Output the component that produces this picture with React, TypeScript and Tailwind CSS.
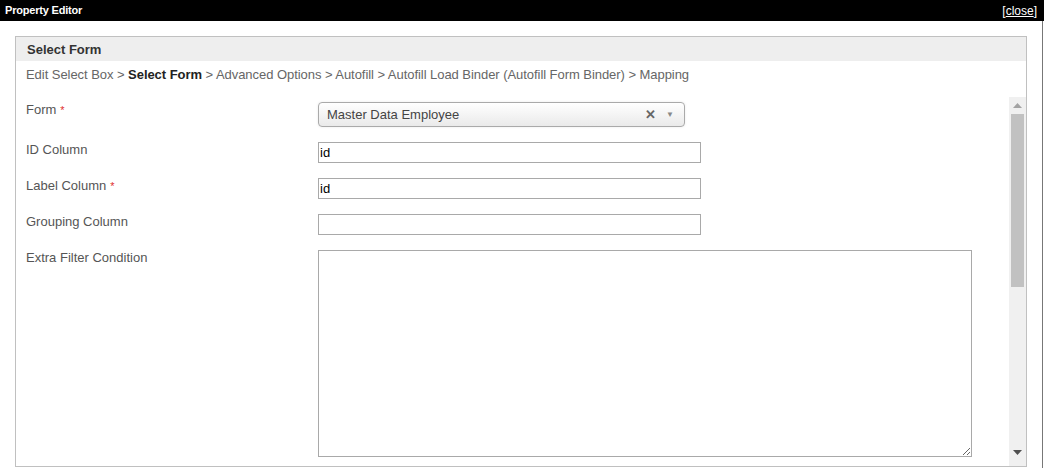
import React from "react"

const fields = [
  { label: "ID Column", value: "id" },
  { label: "Label Column", value: "id", required: true },
  { label: "Grouping Column", value: "" },
]

function Label({ text, required }: { text: string; required?: boolean }) {
  return (
    <div className="w-[292px] shrink-0 pt-[1px] text-[13px] leading-[14px] text-[#555]">
      {text}
      {required && <span className="ml-[4px] text-[11px] text-[#e03030]">*</span>}
    </div>
  )
}

export default function App() {
  return (
    <div className="w-[1044px] h-[468px] overflow-hidden bg-white font-['Liberation_Sans',Arial,sans-serif]">
      {/* Title bar */}
      <div className="h-[21px] bg-black flex items-center justify-between pl-[5px] pr-[7px] text-white">
        <span className="text-[11px] font-bold tracking-[-0.2px]">Property Editor</span>
        <span className="text-[12px]">
          [<span className="underline">close</span>]
        </span>
      </div>

      <div className="flex h-[447px]">
        <div className="w-[1042px] px-[15px] pt-[15px]">
          {/* Panel */}
          <div className="h-[431px] border border-[#c0c0c0] flex flex-col">
            <div className="h-[24px] shrink-0 bg-[#eeeeee] pl-[11px] pt-[1px] flex items-center text-[13px] font-bold text-[#333]">
              Select Form
            </div>
            <div className="h-[36px] shrink-0 pt-[7px] pl-[10px] text-[13px] leading-[14px] tracking-[-0.05px] text-[#666]">
              Edit Select Box &gt; <span className="font-bold text-[#222]">Select Form</span> &gt; Advanced Options &gt;
              Autofill &gt; Autofill Load Binder (Autofill Form Binder) &gt; Mapping
            </div>

            <div className="flex flex-1 min-h-0">
              {/* Form body */}
              <div className="flex-1 pl-[10px] pt-[5px] overflow-hidden">
                <div className="flex">
                  <Label text="Form" required />
                  <div className="w-[367px] h-[25px] rounded-[4px] border border-[#aaa] bg-gradient-to-b from-white to-[#eaeaea] flex items-center pl-[8px] pr-[10px] text-[13px] text-[#444] shadow-[0_0_3px_rgba(0,0,0,0.08)]">
                    <span className="flex-1">Master Data Employee</span>
                    <span className="text-[13px] font-bold text-[#666] mr-[10px]">✕</span>
                    <span className="text-[8px] text-[#888]">▼</span>
                  </div>
                </div>

                {fields.map((f) => (
                  <div key={f.label} className="flex mt-[15px]">
                    <Label text={f.label} required={f.required} />
                    <div className="w-[383px] h-[21px] border border-[#a9a9a9] pl-[1px] flex items-center text-[13px] text-black">
                      {f.value}
                    </div>
                  </div>
                ))}

                <div className="flex mt-[15px]">
                  <Label text="Extra Filter Condition" />
                  <textarea className="w-[654px] h-[207px] border border-[#a9a9a9] outline-none" />
                </div>
              </div>

              {/* Scrollbar */}
              <div className="w-[17px] shrink-0 bg-[#f0f0f0] flex flex-col items-center">
                <div className="h-[17px] flex items-center justify-center">
                  <svg width="9" height="5" viewBox="0 0 9 5">
                    <path d="M0 5 L4.5 0 L9 5 Z" fill="#a3a3a3" />
                  </svg>
                </div>
                <div className="w-[13px] h-[173px] bg-[#c1c1c1]" />
                <div className="flex-1" />
                <div className="h-[17px] mb-[5px] flex items-center justify-center">
                  <svg width="9" height="5" viewBox="0 0 9 5">
                    <path d="M0 0 L9 0 L4.5 5 Z" fill="#505050" />
                  </svg>
                </div>
              </div>
            </div>
          </div>
        </div>
        <div className="w-[2px] border-l border-[#777]" />
      </div>
    </div>
  )
}
